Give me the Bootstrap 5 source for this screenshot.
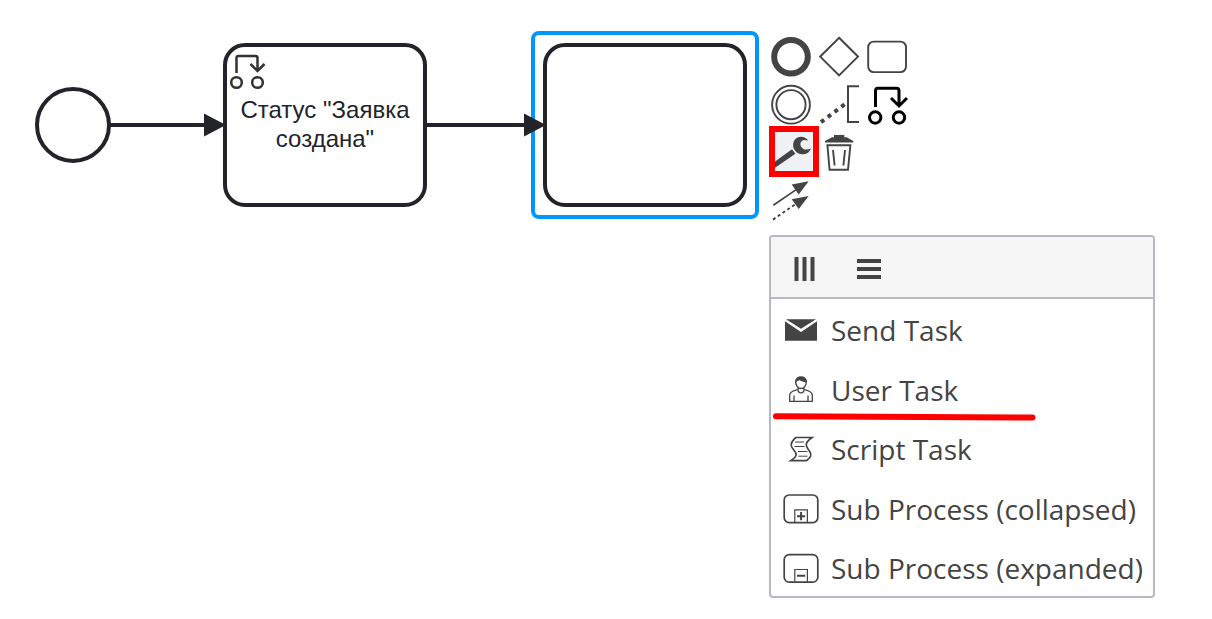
<!DOCTYPE html>
<html lang="ru">
<head>
<meta charset="utf-8">
<meta name="viewport" content="width=device-width, initial-scale=1">
<title>BPMN</title>
<link rel="stylesheet" href="https://cdn.jsdelivr.net/npm/bootstrap@5.3.0/dist/css/bootstrap.min.css">
<style>
  body { background: #fff; }
  svg { display: block; overflow: visible; }
  .canvas { width: 1212px; height: 619px; }
  .flow { left: 0; top: 0; pointer-events: none; }
  .shape { border: 4px solid #22242a; }
  .start-event { left: 35px; top: 87px; width: 76px; height: 76px; border-radius: 50%; }
  .task { top: 43px; width: 204px; height: 164px; border-radius: 22px; font: 24px/28.8px "Liberation Sans", Arial, sans-serif; color: #22242a; }
  .task-status { left: 223px; }
  .task-new { left: 543px; }
  .task-marker { left: 0; top: 0; }
  .selection { left: 531px; top: 31px; width: 228px; height: 188px; border: 4px solid #0095ff; border-radius: 8px; }
  .pad { left: 767px; top: 33px; width: 144px; }
  .pad svg { width: 48px; height: 48px; }
  .pad, .menu-popup { color: #444; }
  .wrench-frame { left: 769px; top: 126px; width: 50px; height: 51px; border: 6px solid #f00; }
  .menu-popup { left: 769px; top: 235px; width: 386px; height: 363px; border: 2px solid #b8b8c6; border-radius: 4px; font: 28px/40px "Open Sans", "Noto Sans", sans-serif; }
  .menu-head { height: 62px; background: #f6f6f6; border-bottom: 2px solid #b8b8c6; padding: 4px 0 0 22px; gap: 40px; }
  .menu-row { height: 59.5px; padding: 3px 0 0 10px; gap: 10px; }
  .menu-row svg { width: 40px; height: 40px; flex: none; margin-top: 1px; }
  .underline-mark { left: 770px; top: 410px; }
</style>
</head>
<body>
<main class="canvas position-relative overflow-hidden">
  <div class="shape start-event position-absolute"></div>
  <div class="shape task task-status position-absolute d-flex align-items-center justify-content-center text-center">
    <svg class="task-marker position-absolute" width="48" height="48" fill="none" stroke="#333" stroke-width="2.5">
      <circle cx="9.5" cy="35.5" r="5.3"/><circle cx="30.5" cy="35.5" r="5.3"/>
      <path d="M9.5 26V11Q9.5 9 11.5 9H28.5Q30.5 9 30.5 11V23M23.5 17L30.5 24L37.5 17"/>
    </svg>
    <span>Статус "Заявка<br>создана"</span>
  </div>
  <div class="selection position-absolute"></div>
  <div class="shape task task-new position-absolute"></div>
  <svg class="flow position-absolute" width="760" height="220" stroke="#22242a" stroke-width="4" fill="#22242a">
    <path d="M110 125H206M427 125H526"/>
    <path stroke="none" d="M204 113.5L226 125L204 136.5ZM524 113.5L546 125L524 136.5Z"/>
  </svg>

  <div class="pad position-absolute d-flex flex-wrap">
    <svg fill="none" stroke="currentColor" stroke-width="6"><circle cx="24" cy="23.8" r="16.8"/></svg>
    <svg fill="none" stroke="currentColor" stroke-width="2"><path d="M24.1 4.8L43 23.6L24.1 42.4L5.2 23.6Z"/></svg>
    <svg fill="none" stroke="currentColor" stroke-width="1.9"><rect x="5.2" y="8.6" width="37.8" height="30.5" rx="5.5"/></svg>
    <svg fill="none" stroke="currentColor" stroke-width="1.9"><circle cx="24" cy="23.7" r="18.9"/><circle cx="24" cy="23.7" r="14.6"/></svg>
    <svg fill="none" stroke="currentColor"><path stroke-width="2" d="M44 5.2H33V41H44"/><path stroke-width="4" stroke-dasharray="4 4.5" d="M6 41.2L30.5 22.7"/></svg>
    <svg fill="none" stroke="#000" stroke-width="3"><circle cx="12.2" cy="36.5" r="5.7"/><circle cx="36" cy="36.5" r="5.7"/><path d="M12.5 26V10Q12.5 7.3 15 7.3H33.5Q36 7.3 36 10V24M28 17L36 25L44 17"/></svg>
    <svg>
      <rect x="6" y="2" width="42" height="42" fill="#f0f1f4"/>
      <path fill="currentColor" d="M7 33.2L25 20.2L28.4 24.8L7 39.6Z"/>
      <path fill="currentColor" d="M41.2 11.6C38.8 7.7 33.9 6.5 30 8.8C25.6 11.4 24.9 17.7 28.1 21.8C32.1 27.1 41.7 26.5 43.9 19.5C40.9 21 37.2 21.3 34.8 18.5C32.4 15.7 33.4 12.4 36.1 11.3C37.8 10.6 39.5 11.7 41.2 11.6Z"/>
    </svg>
    <svg fill="currentColor"><path d="M19 6H29.3V8.3H31.7L38.3 12V13.4H10V12L17 8.3H19Z"/><path fill="none" stroke="currentColor" stroke-width="1.9" d="M12.4 16.2H35.4L33 40.8H14.6ZM18 21L19.6 36.5M30 21L28.4 36.5"/></svg>
    <span style="width:48px"></span>
    <svg fill="currentColor"><path d="M41.7 4.2L24.7 7.5L31.7 17.4ZM41.7 18.9L24.7 22.2L31.7 32.1Z"/><path fill="none" stroke="currentColor" stroke-width="1.7" d="M6.3 28.2L31 11.4"/><path fill="none" stroke="currentColor" stroke-width="1.9" stroke-dasharray="3 2.8" d="M6 42.6L31 25.4"/></svg>
  </div>
  <div class="wrench-frame position-absolute"></div>

  <div class="menu-popup position-absolute overflow-hidden bg-white">
    <div class="menu-head d-flex align-items-center">
      <svg width="24" height="24" fill="currentColor"><path d="M1.5 0h4v24h-4zM9.5 0h4v24h-4zM17.5 0h4v24h-4z"/></svg>
      <svg width="24" height="24" fill="currentColor"><path d="M0 2h24v4H0zM0 10h24v4H0zM0 18h24v4H0z"/></svg>
    </div>
    <div class="menu-row d-flex align-items-center">
      <svg fill="currentColor"><path d="M5 8.2H35L20 17.7ZM4 10.2L20 21L36 10.2V29.7H4Z"/></svg>
      <span class="text-nowrap">Send Task</span>
    </div>
    <div class="menu-row d-flex align-items-center">
      <svg fill="none" stroke="currentColor" stroke-width="1.3"><path d="M17 19.5C14.5 20.5 9 20.5 8.7 25V31.3H31.3V25C31 20.5 25.5 20.5 23 19.5M13 25.5V31M27 25.5V31M17 16.5V19.5C17 24 23 24 23 19.5V16.5M14.8 10.5C14 15.5 17 18.5 20 18.5C23 18.5 26 15.5 25 10.5"/><path fill="currentColor" d="M14.9 11.5C14.5 5.5 25.5 5.5 25.2 11.5C22 12 20 10 18.5 9.5C17 10 16 10 14.9 11.5Z"/></svg>
      <span class="text-nowrap">User Task</span>
    </div>
    <div class="menu-row d-flex align-items-center">
      <svg fill="none" stroke="currentColor" stroke-width="1.7"><path d="M15 7.5H31C21 14.5 26.5 17.5 29 22C31.5 26.5 28 28.5 25.5 30.7H9.8C20 24 13 22 10.5 16.5C9 12.5 12.5 9.5 15 7.5Z"/><path stroke-width="1" d="M14 12H23M13.5 16.5H23.5M17 21.5H26.5M17.5 26.2H26.5"/></svg>
      <span class="text-nowrap">Script Task</span>
    </div>
    <div class="menu-row d-flex align-items-center">
      <svg fill="none" stroke="currentColor" stroke-width="1.7"><rect x="3.2" y="6" width="33.6" height="27.6" rx="5"/><path stroke-width="1.2" d="M13.8 33.2V20.9H26.4V33.2"/><path stroke-width="2" d="M16 27.2H24.2M20.1 23.1V31.3"/></svg>
      <span class="text-nowrap">Sub Process (collapsed)</span>
    </div>
    <div class="menu-row d-flex align-items-center">
      <svg fill="none" stroke="currentColor" stroke-width="1.7"><rect x="3.2" y="5.6" width="33.6" height="27.6" rx="5"/><path stroke-width="1.2" d="M13.8 32.8V20.5H26.4V32.8"/><path stroke-width="2" d="M16 26.8H24.2"/></svg>
      <span class="text-nowrap">Sub Process (expanded)</span>
    </div>
  </div>
  <svg class="underline-mark position-absolute" width="270" height="14"><path d="M6 6.3L262.5 7.6" stroke="#f00" stroke-width="6" stroke-linecap="round"/></svg>
</main>
<script src="https://cdn.jsdelivr.net/npm/bootstrap@5.3.0/dist/js/bootstrap.bundle.min.js"></script>
</body>
</html>
